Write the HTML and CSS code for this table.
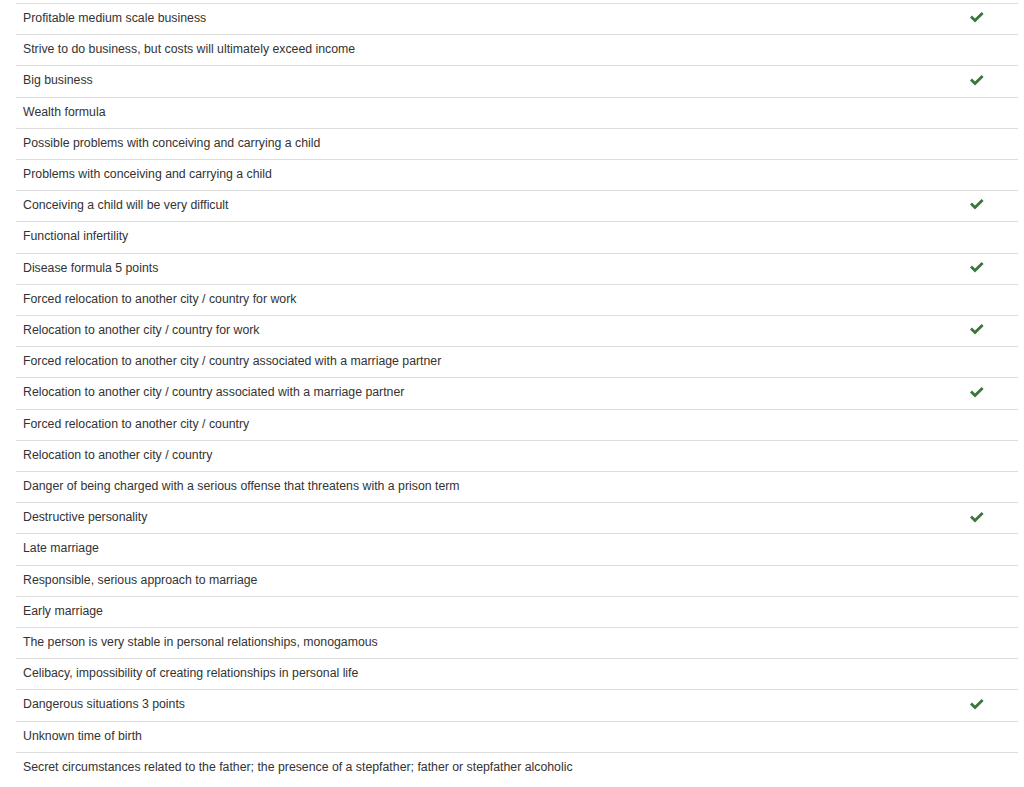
FILE: index.html
```html
<!DOCTYPE html>
<html lang="en">
<head>
    <meta charset="UTF-8">
    <title>Formulas</title>
    <link rel="stylesheet" href="styles.css">
</head>
<body>
    <div class="wrap">
        <table class="formulas">
            <tr><td>Profitable medium scale business</td><td class="mark"><span class="ok"></span></td></tr>
            <tr><td>Strive to do business, but costs will ultimately exceed income</td><td class="mark"></td></tr>
            <tr><td>Big business</td><td class="mark"><span class="ok"></span></td></tr>
            <tr><td>Wealth formula</td><td class="mark"></td></tr>
            <tr><td>Possible problems with conceiving and carrying a child</td><td class="mark"></td></tr>
            <tr><td>Problems with conceiving and carrying a child</td><td class="mark"></td></tr>
            <tr><td>Conceiving a child will be very difficult</td><td class="mark"><span class="ok"></span></td></tr>
            <tr><td>Functional infertility</td><td class="mark"></td></tr>
            <tr><td>Disease formula 5 points</td><td class="mark"><span class="ok"></span></td></tr>
            <tr><td>Forced relocation to another city / country for work</td><td class="mark"></td></tr>
            <tr><td>Relocation to another city / country for work</td><td class="mark"><span class="ok"></span></td></tr>
            <tr><td>Forced relocation to another city / country associated with a marriage partner</td><td class="mark"></td></tr>
            <tr><td>Relocation to another city / country associated with a marriage partner</td><td class="mark"><span class="ok"></span></td></tr>
            <tr><td>Forced relocation to another city / country</td><td class="mark"></td></tr>
            <tr><td>Relocation to another city / country</td><td class="mark"></td></tr>
            <tr><td>Danger of being charged with a serious offense that threatens with a prison term</td><td class="mark"></td></tr>
            <tr><td>Destructive personality</td><td class="mark"><span class="ok"></span></td></tr>
            <tr><td>Late marriage</td><td class="mark"></td></tr>
            <tr><td>Responsible, serious approach to marriage</td><td class="mark"></td></tr>
            <tr><td>Early marriage</td><td class="mark"></td></tr>
            <tr><td>The person is very stable in personal relationships, monogamous</td><td class="mark"></td></tr>
            <tr><td>Celibacy, impossibility of creating relationships in personal life</td><td class="mark"></td></tr>
            <tr><td>Dangerous situations 3 points</td><td class="mark"><span class="ok"></span></td></tr>
            <tr><td>Unknown time of birth</td><td class="mark"></td></tr>
            <tr><td>Secret circumstances related to the father; the presence of a stepfather; father or stepfather alcoholic</td><td class="mark"></td></tr>
        </table>
    </div>

    <script>
        // same checkmark glyph in every ticked row
        const tick = '<svg width="14" height="11" viewBox="0 0 14 11"><polygon points="0,5.6 2,3.6 5,6.6 11.6,0 13.6,2 5,10.6" fill="#3c763d"/></svg>';
        document.querySelectorAll('.ok').forEach(function (el) {
            el.innerHTML = tick;
        });
    </script>
</body>
</html>
```

FILE: styles.css
```css
* {
    margin: 0;
    padding: 0;
    box-sizing: border-box;
}

body {
    background: #fff;
    font-family: "Liberation Sans", Arial, sans-serif;
    font-size: 12.3px;
    color: #333;
}

.wrap {
    padding: 3px 6px 0 16px;
}

/* Formula list */
.formulas {
    width: 100%;
    border-collapse: collapse;
}

.formulas td {
    border-top: 1px solid #ddd;
    padding: 5px 7px 7px;
    line-height: 18.2px;
    height: 31.2px;
    vertical-align: middle;
}

.formulas td.mark {
    width: 82px;
    text-align: center;
}

.ok {
    display: inline-block;
    vertical-align: middle;
    line-height: 0;
    margin-top: -2px;
}
```
